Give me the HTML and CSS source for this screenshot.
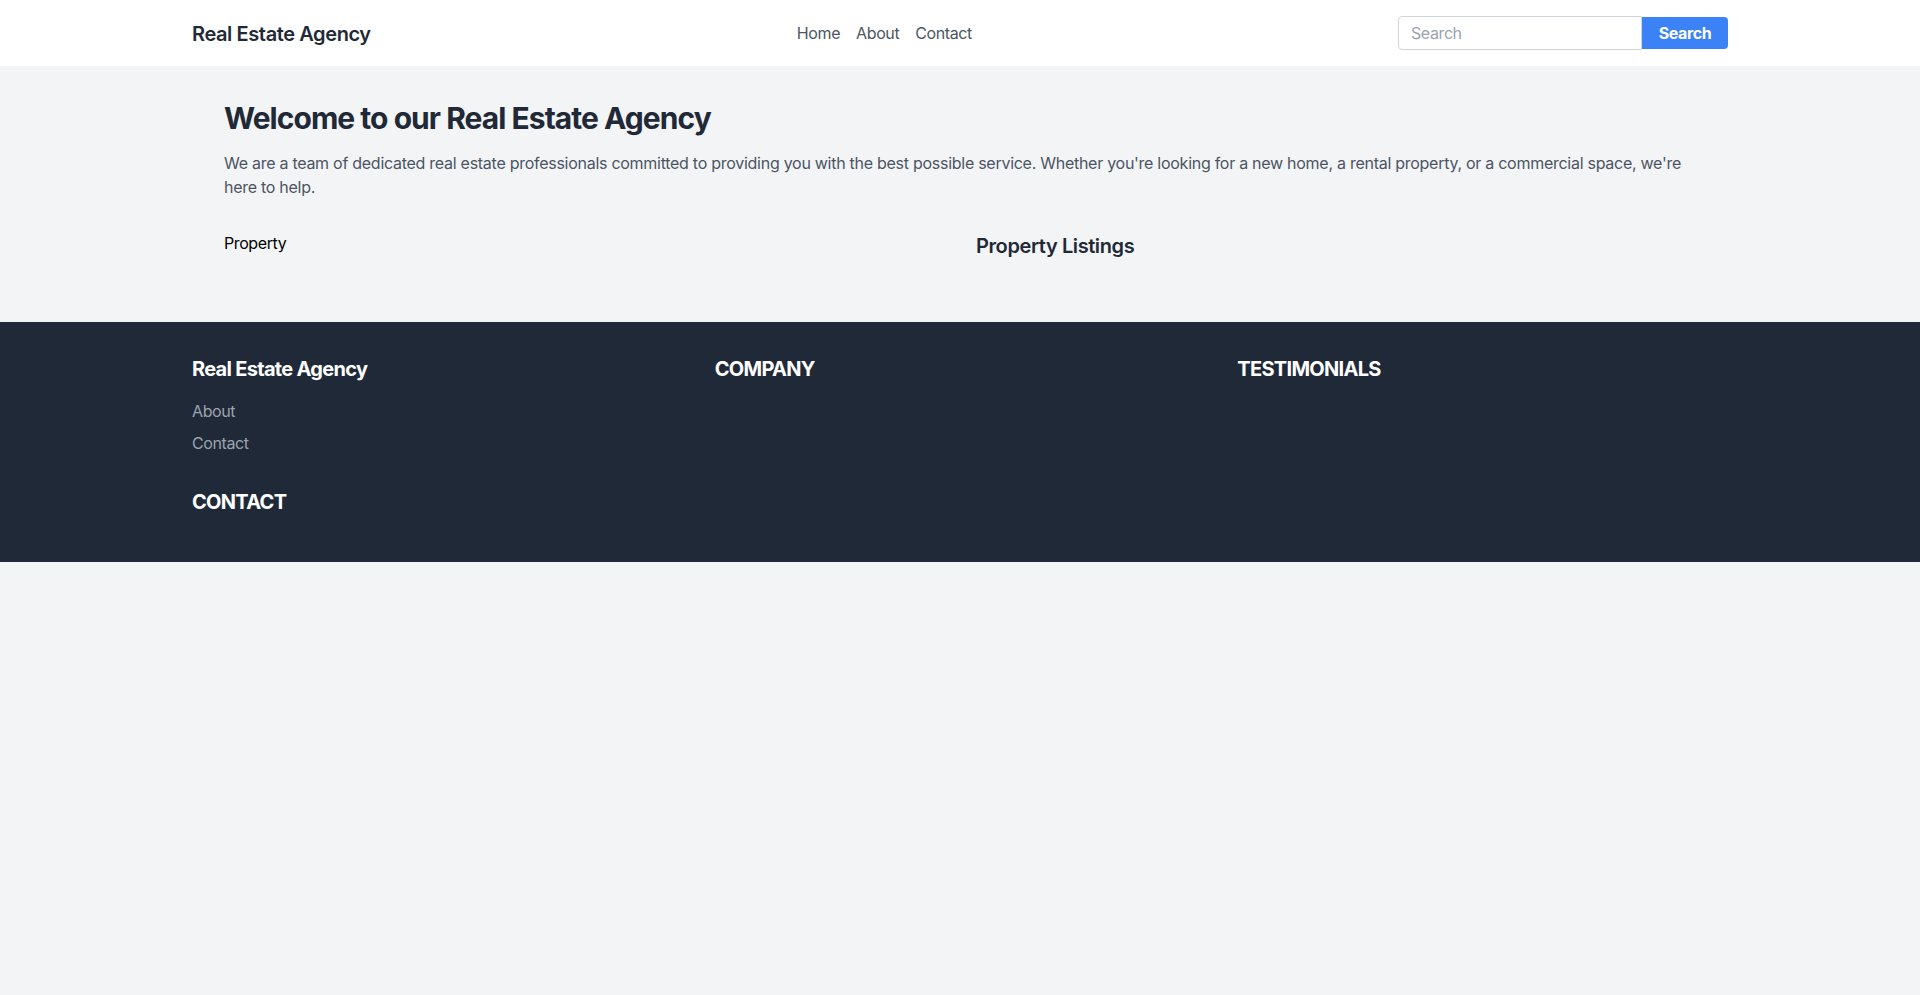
FILE: index.html
```html
<!DOCTYPE html>
<html lang="en">
<head>
<meta charset="utf-8">
<title>Real Estate Agency</title>
<link rel="stylesheet" href="styles.css">
</head>
<body>
<nav class="navbar">
  <div class="container nav-inner">
    <a class="brand" href="#">Real Estate Agency</a>
    <ul class="nav-links">
      <li><a href="#">Home</a></li>
      <li><a href="#">About</a></li>
      <li><a href="#">Contact</a></li>
    </ul>
    <form class="search-form">
      <input class="search-input" type="text" placeholder="Search">
      <button class="search-btn" type="button">Search</button>
    </form>
  </div>
</nav>
<main class="container main">
  <h1 class="welcome-title">Welcome to our Real Estate Agency</h1>
  <p class="welcome-text">We are a team of dedicated real estate professionals committed to providing you with the best possible service. Whether you're looking for a new home, a rental property, or a commercial space, we're here to help.</p>
  <div class="content-grid">
    <div class="property-image">Property</div>
    <div class="listings">
      <h2 class="listings-title">Property Listings</h2>
    </div>
  </div>
</main>
<footer class="footer">
  <div class="container footer-grid">
    <div class="footer-col">
      <h3 class="footer-title">Real Estate Agency</h3>
      <ul class="footer-links">
        <li><a href="#">About</a></li>
        <li><a href="#">Contact</a></li>
      </ul>
    </div>
    <div class="footer-col">
      <h3 class="footer-title">COMPANY</h3>
    </div>
    <div class="footer-col">
      <h3 class="footer-title">TESTIMONIALS</h3>
    </div>
    <div class="footer-col">
      <h3 class="footer-title">CONTACT</h3>
    </div>
  </div>
</footer>
</body>
</html>
```

FILE: styles.css
```css
* { box-sizing: border-box; }
html, body { margin: 0; padding: 0; }
body {
  font-family: Inter, "Noto Sans", "Liberation Sans", sans-serif;
  background: #f3f4f6;
  color: #000;
  font-size: 16px;
  line-height: 24px;
  letter-spacing: -0.025em;
}
a { text-decoration: none; color: inherit; }
ul { list-style: none; margin: 0; padding: 0; }
h1, h2, h3, p { margin: 0; }

.container {
  width: 100%;
  max-width: 1536px;
  margin: 0 auto;
}

.navbar {
  background: #fff;
  padding: 16px 0;
}
.nav-inner {
  display: flex;
  align-items: center;
  justify-content: space-between;
}
.brand {
  font-size: 20px;
  line-height: 28px;
  font-weight: 600;
  color: #1f2937;
  padding-top: 1px;
}
.nav-links {
  display: flex;
  gap: 16px;
}
.nav-links a {
  color: #4b5563;
}
.search-form {
  display: flex;
  align-items: center;
}
.search-input {
  width: 244px;
  height: 34px;
  padding: 4px 12px;
  border: 1px solid #d1d5db;
  border-radius: 4px 0 0 4px;
  font-family: inherit;
  font-size: 16px;
  line-height: 24px;
  letter-spacing: inherit;
  color: #111827;
  background: #fff;
  outline: none;
}
.search-input::placeholder { color: #9ca3af; }
.search-btn {
  height: 32px;
  width: 86px;
  padding: 4px 16px;
  border: 0;
  border-radius: 0 4px 4px 0;
  background: #3b82f6;
  color: #fff;
  font-family: inherit;
  font-size: 16px;
  line-height: 24px;
  letter-spacing: inherit;
  font-weight: 700;
}

.main {
  padding: 34px 32px 47px;
}
.welcome-title {
  font-size: 30px;
  line-height: 36px;
  font-weight: 700;
  color: #1f2937;
  letter-spacing: -0.032em;
  margin-bottom: 15px;
}
.welcome-text {
  color: #4b5563;
  letter-spacing: -0.017em;
}
.content-grid {
  margin-top: 32px;
  display: grid;
  grid-template-columns: 1fr 1fr;
  gap: 32px;
}
.property-image {
  color: #000;
}
.listings-title {
  font-size: 20px;
  line-height: 28px;
  font-weight: 600;
  color: #1f2937;
  margin-top: 1px;
  margin-bottom: 15px;
}

.footer {
  background: #1f2937;
  padding: 33px 0 31px;
}
.footer-grid {
  display: grid;
  grid-template-columns: repeat(3, 1fr);
  gap: 33px 32px;
}
.footer-title {
  font-size: 20px;
  line-height: 28px;
  font-weight: 700;
  color: #fff;
  letter-spacing: -0.035em;
  margin-bottom: 16px;
}
.footer-col:nth-child(4) .footer-title {
  margin-bottom: 15px;
}
.footer-links {
  display: flex;
  flex-direction: column;
  gap: 8px;
}
.footer-links a {
  color: #9ca3af;
}
```
